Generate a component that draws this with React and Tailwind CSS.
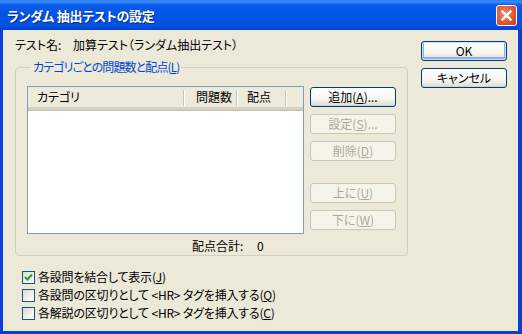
import React from "react";

const FONT = "[font-family:'Noto_Sans_CJK_JP','Noto_Sans',sans-serif] [font-feature-settings:'palt']";

function Btn({ children, disabled, isDefault }) {
  const base =
    "h-[20px] w-full flex items-center justify-center rounded-[3px] border text-[12px] leading-none";
  if (disabled) {
    return (
      <div className={`${base} border-[#C9C7BA] bg-[#F5F4EA] text-[#ACA899]`}>{children}</div>
    );
  }
  return (
    <div
      className={`${base} border-[#003C74] text-black bg-[linear-gradient(#FFFFFF,#F6F6F2_60%,#E3E2DA_90%,#D6D0C5)] ${
        isDefault ? "shadow-[inset_0_0_0_1px_#CEE7FF,inset_0_-1px_0_2px_#89ADE4]" : ""
      }`}
    >
      {children}
    </div>
  );
}

function Check({ checked, children }) {
  return (
    <div className="flex items-center h-[18px] pl-[7px]">
      <div className="w-[13px] h-[13px] border border-[#1C5180] bg-[linear-gradient(135deg,#DCDBD5,#F4F4F0_70%,#FFFFFF)] flex items-center justify-center">
        {checked && (
          <svg width="9" height="9" viewBox="0 0 9 9">
            <path d="M1 4 L3.5 6.5 L8 1.5" stroke="#21A121" strokeWidth="2" fill="none" />
          </svg>
        )}
      </div>
      <span className="ml-[3px] text-[12px] leading-[14px] text-black tracking-[-0.2px]">{children}</span>
    </div>
  );
}

function U({ children }) {
  return <span className="underline underline-offset-[1px]">{children}</span>;
}

export default function App() {
  return (
    <div className={`w-[522px] h-[334px] flex flex-col bg-[#0A3FD6] ${FONT}`}>
      <div className="h-[30px] shrink-0 flex items-center pl-[7px] pr-[5px] bg-[linear-gradient(#2A79F5_0%,#3D8EF8_6%,#0C5DEA_16%,#0055E5_50%,#0052E0_85%,#0044CB_100%)]">
        <span className="text-white font-bold text-[13px] leading-none tracking-[-0.3px] [text-shadow:1px_1px_0_#0A2E8A]">
          ランダム 抽出テストの設定
        </span>
        <div className="flex-1" />
        <div className="w-[21px] h-[21px] rounded-[3px] border border-white bg-[radial-gradient(circle_at_40%_40%,#EE8B6A,#E05A33_55%,#C8391A)] flex items-center justify-center">
          <svg width="11" height="11" viewBox="0 0 11 11">
            <path d="M1.5 1.5 L9.5 9.5 M9.5 1.5 L1.5 9.5" stroke="white" strokeWidth="2.4" strokeLinecap="square" />
          </svg>
        </div>
      </div>
      <div className="flex-1 ml-[3px] mr-[4px] mb-[3px] bg-[#ECE9D8] flex pl-[12px] text-[12px] text-black">
        <div className="w-[393px] flex flex-col pt-[8px]">
          <div className="flex h-[14px] leading-[14px]">
            <span className="w-[58px]">テスト名:</span>
            <span>加算テスト（ランダム抽出テスト）</span>
          </div>
          <fieldset className="mt-[8px] border border-[#D0D0BF] rounded-[4px] p-0 pl-[11px] pb-[2px]">
            <legend className="ml-[4px] px-[2px] text-[#0046D5] leading-[14px] tracking-[-0.9px]">
              カテゴリごとの問題数と配点(<U>L</U>)
            </legend>
            <div className="flex mt-[12px]">
              <div className="w-[277px] h-[148px] border border-[#7F9DB9] bg-white flex flex-col">
                <div className="h-[23px] flex bg-[#EBEADB] border-b-[3px] border-[#D6D2C2] shadow-[0_1px_0_#C1BDAE]">
                  <div className="w-[157px] flex items-center pl-[9px] relative">
                    カテゴリ
                    <span className="absolute right-0 top-[3px] bottom-[1px] w-[2px] border-l border-[#C7C5B2] border-r border-r-white" />
                  </div>
                  <div className="w-[53px] flex items-center pl-[11px] relative">
                    問題数
                    <span className="absolute right-0 top-[3px] bottom-[1px] w-[2px] border-l border-[#C7C5B2] border-r border-r-white" />
                  </div>
                  <div className="w-[49px] flex items-center pl-[9px] relative">
                    配点
                    <span className="absolute right-0 top-[3px] bottom-[1px] w-[2px] border-l border-[#C7C5B2] border-r border-r-white" />
                  </div>
                  <div className="flex-1" />
                </div>
              </div>
              <div className="ml-[6px] w-[86px] flex flex-col mt-[1px]">
                <Btn>追加(<U>A</U>)...</Btn>
                <div className="h-[7px]" />
                <Btn disabled>設定(<U>S</U>)...</Btn>
                <div className="h-[7px]" />
                <Btn disabled>削除(<U>D</U>)</Btn>
                <div className="h-[22px]" />
                <Btn disabled>上に(<U>U</U>)</Btn>
                <div className="h-[7px]" />
                <Btn disabled>下に(<U>W</U>)</Btn>
              </div>
            </div>
            <div className="flex h-[14px] leading-[14px] mt-[5px] ml-[165px]">
              <span className="w-[65px]">配点合計:</span>
              <span>0</span>
            </div>
          </fieldset>
          <div className="mt-[12px] flex flex-col">
            <Check checked>各設問を結合して表示(<U>J</U>)</Check>
            <Check>各設問の区切りとして &lt;HR&gt; タグを挿入する(<U>Q</U>)</Check>
            <Check>各解説の区切りとして &lt;HR&gt; タグを挿入する(<U>C</U>)</Check>
          </div>
        </div>
        <div className="ml-[13px] w-[86px] flex flex-col pt-[11px]">
          <Btn isDefault>OK</Btn>
          <div className="h-[7px]" />
          <Btn>キャンセル</Btn>
        </div>
      </div>
    </div>
  );
}
